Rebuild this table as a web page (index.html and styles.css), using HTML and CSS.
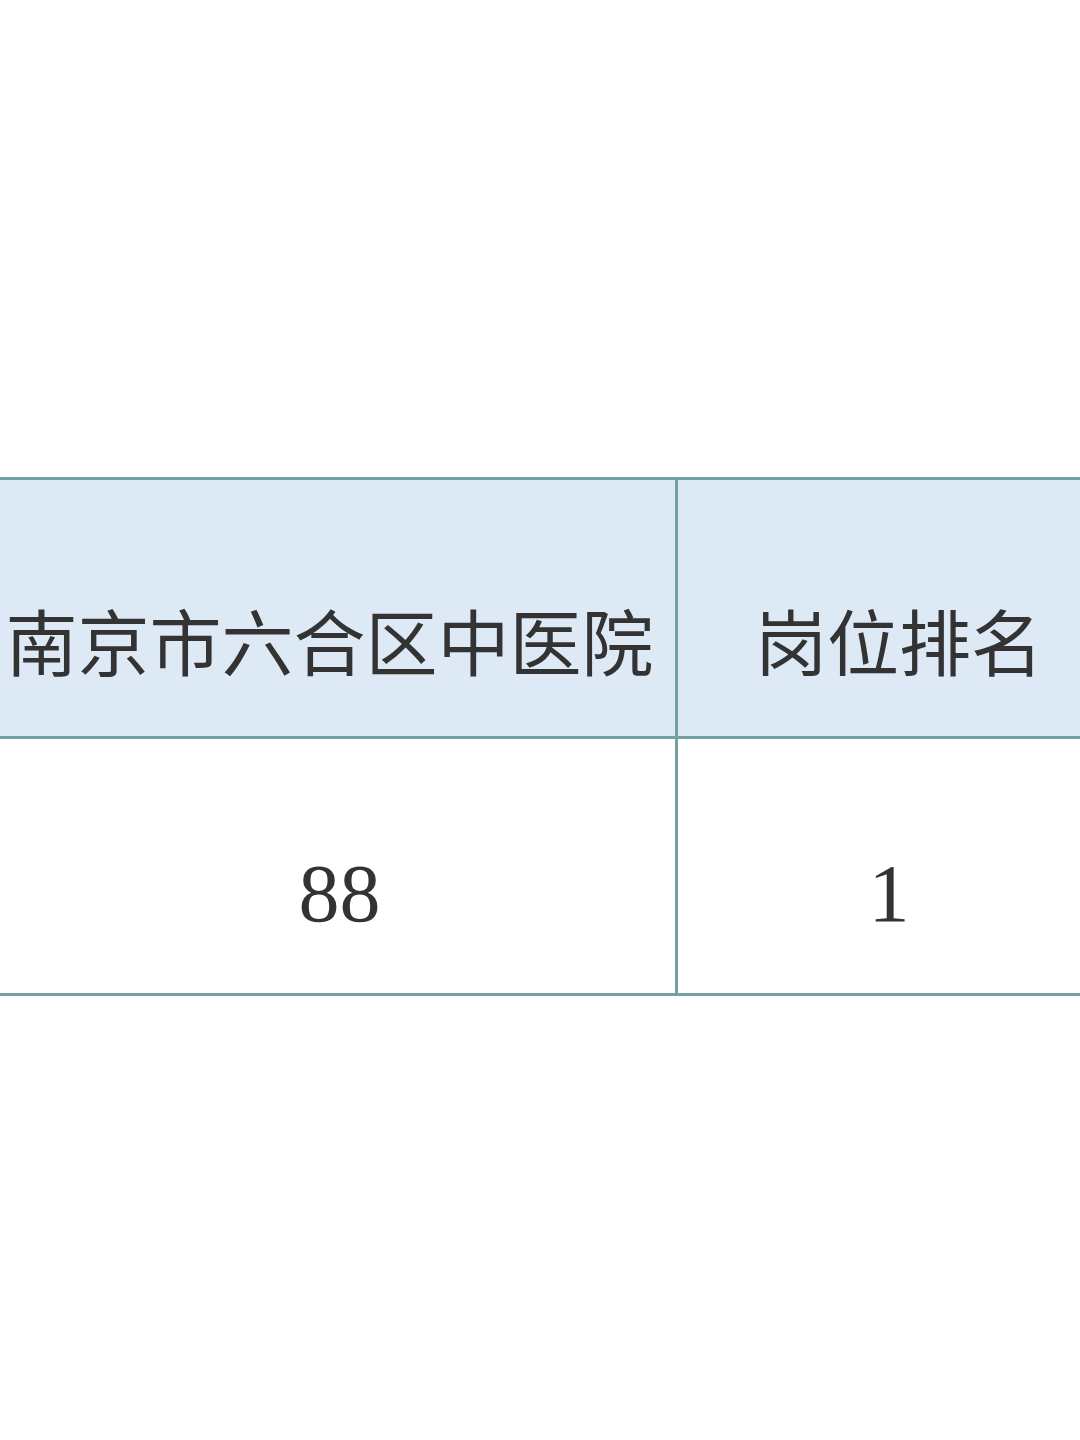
FILE: index.html
```html
<!DOCTYPE html>
<html lang="zh-CN">
<head>
<meta charset="utf-8">
<link rel="stylesheet" href="styles.css">
</head>
<body>
<div class="page">
  <div class="table">
    <div class="cell head first">南京市六合区中医院</div>
    <div class="cell head last">岗位排名</div>
    <div class="cell body-cell first">88</div>
    <div class="cell body-cell last">1</div>
  </div>
</div>
</body>
</html>
```
FILE: styles.css
```css
html, body {
  margin: 0;
  padding: 0;
  background: #ffffff;
}
.page {
  width: 1080px;
  height: 1440px;
  overflow: hidden;
  padding-top: 477px;
  box-sizing: border-box;
}
.table {
  display: grid;
  grid-template-columns: 678px 442px;
  width: 1120px;
  border-top: 3px solid #76a1a1;
}
.cell {
  display: flex;
  align-items: center;
  justify-content: center;
  border-right: 3px solid #76a1a1;
  border-bottom: 3px solid #76a1a1;
  color: #333333;
  box-sizing: border-box;
}
.cell.last {
  border-right: none;
}
.head {
  height: 259px;
  background: #dde9f4;
  font-family: "Noto Sans CJK SC", "Noto Sans", sans-serif;
  font-weight: 400;
  font-size: 72px;
  padding-top: 60px;
}
.head.first {
  padding-right: 16px;
}
.body-cell {
  height: 257px;
  background: #ffffff;
  font-family: "Liberation Serif", serif;
  font-size: 82px;
  padding-top: 56px;
}
.body-cell.first {
  padding-left: 4px;
}
.body-cell.last {
  padding-right: 20px;
}
```
